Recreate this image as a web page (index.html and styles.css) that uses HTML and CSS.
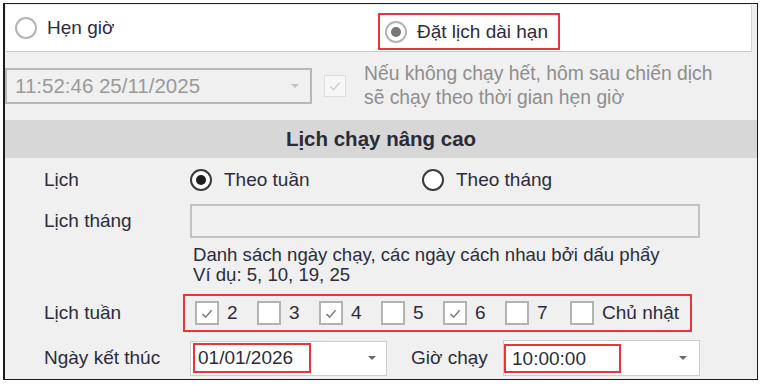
FILE: index.html
```html
<!DOCTYPE html>
<html>
<head>
	<meta charset="utf-8">
	<title>Lịch chạy</title>
	<link rel="stylesheet" href="styles.css">
</head>
<body>
	<div class="frame">
		<div class="mode">
			<div class="mode-cell">
				<span class="radio"></span>Hẹn giờ
			</div>
			<div class="mode-cell">
				<div class="mark mode-mark"><span class="radio radio-grey"></span>Đặt lịch dài hạn</div>
			</div>
		</div>

		<div class="start">
			<div class="combo combo-off">
				<span>11:52:46 25/11/2025</span>
				<span class="arrow arrow-off"></span>
			</div>
			<span class="check check-off">
				<svg viewBox="0 0 22 22" width="20" height="20"><polyline points="6,11.5 9.5,15 16,7.5" fill="none" stroke="#cfcfcf" stroke-width="1.6"/></svg>
			</span>
			<p class="note">Nếu không chạy hết, hôm sau chiến dịch<br>sẽ chạy theo thời gian hẹn giờ</p>
		</div>

		<div class="head">Lịch chạy nâng cao</div>

		<div class="form">
			<div class="row row-kind">
				<div class="label">Lịch</div>
				<div class="opt opt-week"><span class="radio radio-dark radio-on"></span>Theo tuần</div>
				<div class="opt"><span class="radio radio-dark"></span>Theo tháng</div>
			</div>

			<div class="row row-month">
				<div class="label">Lịch tháng</div>
				<div class="textbox"></div>
			</div>

			<div class="help">
				Danh sách ngày chạy, các ngày cách nhau bởi dấu phẩy<br>
				Ví dụ: 5, 10, 19, 25
			</div>

			<div class="row row-week">
				<div class="label">Lịch tuần</div>
				<div class="mark days">
					<div class="day"><span class="check"><svg viewBox="0 0 22 22" width="21" height="21"><polyline points="6,11.5 9.5,15 16,7.5" fill="none" stroke="#7a7a7a" stroke-width="1.6"/></svg></span>2</div>
					<div class="day"><span class="check"></span>3</div>
					<div class="day"><span class="check"><svg viewBox="0 0 22 22" width="21" height="21"><polyline points="6,11.5 9.5,15 16,7.5" fill="none" stroke="#7a7a7a" stroke-width="1.6"/></svg></span>4</div>
					<div class="day"><span class="check"></span>5</div>
					<div class="day"><span class="check"><svg viewBox="0 0 22 22" width="21" height="21"><polyline points="6,11.5 9.5,15 16,7.5" fill="none" stroke="#7a7a7a" stroke-width="1.6"/></svg></span>6</div>
					<div class="day day-wide"><span class="check"></span>7</div>
					<div class="day day-last"><span class="check"></span>Chủ nhật</div>
				</div>
			</div>

			<div class="row row-end">
				<div class="label">Ngày kết thúc</div>
				<div class="combo combo-end">
					<div class="mark value">01/01/2026</div>
					<span class="arrow"></span>
				</div>
				<div class="label label-time">Giờ chạy</div>
				<div class="combo combo-time">
					<div class="mark value value-time">10:00:00</div>
					<span class="arrow"></span>
				</div>
			</div>
		</div>
	</div>
</body>
</html>
```

FILE: styles.css
```css
body {
	margin: 3px;
	background: #fff;
	font-family: "Liberation Sans", Arial, sans-serif;
	font-size: 19px;
	color: #2c2c3c;
}

.frame {
	width: 752px;
	height: 375px;
	border: 1px solid #1c1c1c;
	border-left-width: 2px;
	background: #f0f0f0;
	overflow: hidden;
}

/* top mode switch */
.mode {
	display: grid;
	grid-template-columns: 372px 1fr;
	height: 46px;
	margin: 1px 5px 0 1px;
	background: #fff;
	border-bottom: 1px solid #c8c8c8;
	border-right: 1px solid #d4d4d4;
}

.mode-cell {
	display: flex;
	align-items: center;
	padding-left: 9px;
}

.mode-cell + .mode-cell {
	padding-left: 0;
	align-items: flex-start;
}

.mark {
	border: 2px solid #e8353a;
	box-sizing: border-box;
}

.mode-mark {
	display: flex;
	align-items: center;
	height: 37px;
	margin-top: 8px;
	padding: 0 10px 0 5px;
}

.radio {
	box-sizing: border-box;
	width: 22px;
	height: 22px;
	border: 2px solid #b4b4b4;
	border-radius: 50%;
	background: #fff;
	margin-right: 10px;
	display: flex;
	align-items: center;
	justify-content: center;
	flex: none;
}

.radio-grey::after {
	content: "";
	width: 10px;
	height: 10px;
	border-radius: 50%;
	background: #777;
}

.radio-dark {
	border-color: #3a3a3a;
	margin-right: 12px;
}

.radio-on::after {
	content: "";
	width: 10px;
	height: 10px;
	border-radius: 50%;
	background: #1e1e1e;
}

/* start time row */
.start {
	display: flex;
	align-items: center;
	height: 68px;
}

.combo {
	box-sizing: border-box;
	display: flex;
	align-items: center;
	justify-content: space-between;
	border: 1px solid #cdcdcd;
	background: #fff;
}

.combo-off {
	width: 307px;
	height: 36px;
	border: 2px solid #b9b9b9;
	background: #f0f0f0;
	color: #9a9a9a;
	font-size: 20.5px;
	padding: 0 11px 0 8px;
}

.arrow {
	width: 0;
	height: 0;
	border-left: 4px solid transparent;
	border-right: 4px solid transparent;
	border-top: 4px solid #6a6a6a;
}

.arrow-off {
	border-top-color: #c4c4c4;
}

.check {
	box-sizing: border-box;
	width: 24px;
	height: 24px;
	border: 2px solid #b3b3b3;
	background: #fff;
	display: flex;
	align-items: center;
	justify-content: center;
	flex: none;
}

.check-off {
	width: 22px;
	height: 22px;
	margin-left: 12px;
	border: 1px solid #dedede;
	background: #f7f7f7;
}

.note {
	margin: 0 0 0 18px;
	font-size: 19.3px;
	line-height: 24px;
	color: #8e8e8e;
}

/* advanced section */
.head {
	height: 38px;
	line-height: 38px;
	text-align: center;
	font-size: 20.5px;
	font-weight: bold;
	background: #d7d7d7;
	color: #2a2a38;
}

.form {
	padding-left: 39px;
}

.row {
	display: flex;
	align-items: center;
}

.label {
	width: 146px;
	flex: none;
}

.row-kind {
	height: 36px;
	margin-top: 4px;
}

.opt {
	display: flex;
	align-items: center;
}

.opt-week {
	width: 232px;
}

.row-month {
	margin-top: 6px;
}

.textbox {
	width: 510px;
	height: 34px;
	box-sizing: border-box;
	border: 2px solid #c2c2c2;
	background: #f0f0f0;
}

.help {
	margin: 7px 0 0 149px;
	font-size: 18.6px;
	line-height: 20px;
	color: #2c2c3c;
}

.row-week {
	margin-top: 9px;
}

.days {
	display: flex;
	align-items: center;
	width: 509px;
	height: 38px;
	margin-left: -7px;
	padding-left: 10px;
}

.day {
	display: flex;
	align-items: center;
	width: 62px;
	gap: 8px;
}

.day-wide {
	width: 65px;
}

.day-last {
	width: auto;
	white-space: nowrap;
}

.row-end {
	margin-top: 8px;
}

.combo-end {
	width: 197px;
	height: 35px;
	padding: 0 10px 0 2px;
}

.value {
	width: 118px;
	height: 30px;
	line-height: 26px;
	padding-left: 3px;
}

.label-time {
	width: 92px;
	margin-left: 24px;
}

.combo-time {
	width: 197px;
	height: 36px;
	padding: 0 12px 0 0;
}

.value-time {
	width: 117px;
	height: 29px;
	line-height: 25px;
	padding-left: 6px;
}
```
